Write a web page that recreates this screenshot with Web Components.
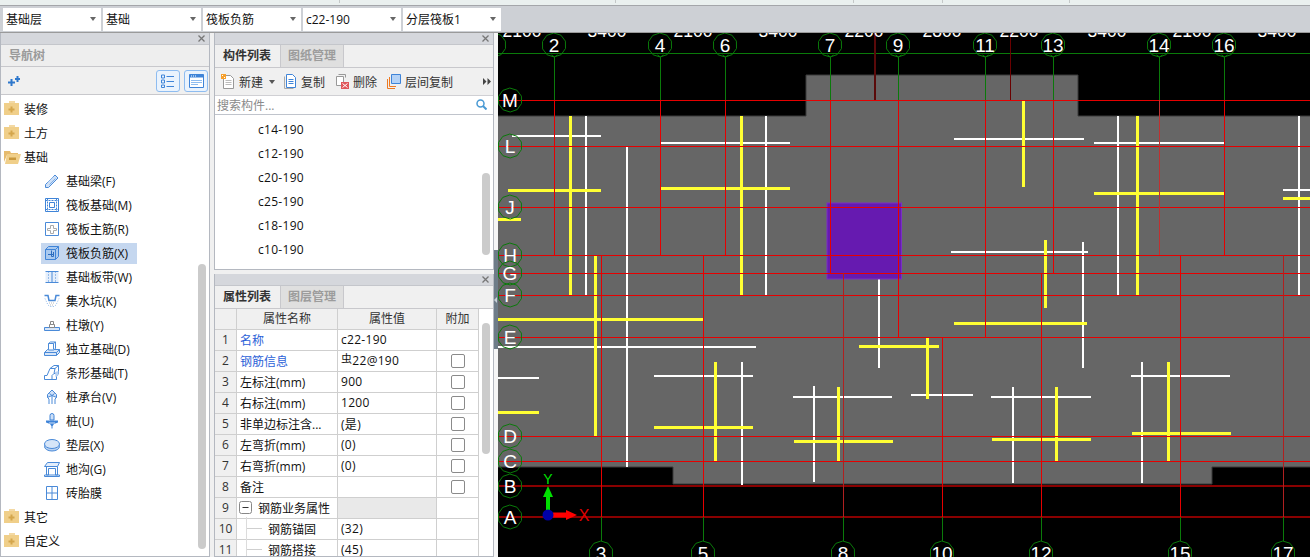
<!doctype html>
<html lang="zh-CN">
<head>
<meta charset="UTF-8" />
<title>筏板负筋</title>
<style>
  html, body { margin: 0; height: 557px; overflow: hidden; background: #f0f0f0; }
  body { font: 12px "Open Sans", "Noto Sans CJK SC", sans-serif; color: #111; }
  #app { display: flex; flex-direction: column; height: 557px; }
  #main { display: flex; flex: 1; min-height: 0; }
  #mid { display: flex; flex-direction: column; gap: 4px; width: 280px; margin-left: 4px; }
</style>
</head>
<body>
<div id="app">
  <top-bar>
    <combo-box style="width:98px">基础层</combo-box>
    <combo-box style="width:98px">基础</combo-box>
    <combo-box style="width:98px">筏板负筋</combo-box>
    <combo-box style="width:98px">c22-190</combo-box>
    <combo-box style="width:98px">分层筏板1</combo-box>
  </top-bar>
  <div id="main">
    <dock-panel style="width:210px">
      <nav-tree>
        <tree-item icon="closed" top>装修</tree-item>
        <tree-item icon="closed" top>土方</tree-item>
        <tree-item icon="open" top>基础</tree-item>
        <tree-item icon="beam">基础梁(F)</tree-item>
        <tree-item icon="raft">筏板基础(M)</tree-item>
        <tree-item icon="main">筏板主筋(R)</tree-item>
        <tree-item icon="neg" selected>筏板负筋(X)</tree-item>
        <tree-item icon="band">基础板带(W)</tree-item>
        <tree-item icon="pit">集水坑(K)</tree-item>
        <tree-item icon="pier">柱墩(Y)</tree-item>
        <tree-item icon="iso">独立基础(D)</tree-item>
        <tree-item icon="strip">条形基础(T)</tree-item>
        <tree-item icon="cap">桩承台(V)</tree-item>
        <tree-item icon="pile">桩(U)</tree-item>
        <tree-item icon="pad">垫层(X)</tree-item>
        <tree-item icon="trench">地沟(G)</tree-item>
        <tree-item icon="brick">砖胎膜</tree-item>
        <tree-item icon="closed" top>其它</tree-item>
        <tree-item icon="closed" top>自定义</tree-item>
      </nav-tree>
    </dock-panel>
    <div id="mid">
      <dock-panel style="height:237px">
        <tab-strip active="构件列表" other="图纸管理"></tab-strip>
        <comp-list>
          <span>c14-190</span><span>c12-190</span><span>c20-190</span>
          <span>c25-190</span><span>c18-190</span><span>c10-190</span>
        </comp-list>
      </dock-panel>
      <dock-panel style="flex:1;min-height:0">
        <tab-strip active="属性列表" other="图层管理"></tab-strip>
        <prop-table>
          <prop-row n="1" value="c22-190" blue nocheck>名称</prop-row>
          <prop-row n="2" value="22@190" blue rebar>钢筋信息</prop-row>
          <prop-row n="3" value="900">左标注(mm)</prop-row>
          <prop-row n="4" value="1200">右标注(mm)</prop-row>
          <prop-row n="5" value="(是)">非单边标注含...</prop-row>
          <prop-row n="6" value="(0)">左弯折(mm)</prop-row>
          <prop-row n="7" value="(0)">右弯折(mm)</prop-row>
          <prop-row n="8" value="">备注</prop-row>
          <prop-row n="9" value="" group nocheck>钢筋业务属性</prop-row>
          <prop-row n="10" value="(32)" child nocheck>钢筋锚固</prop-row>
          <prop-row n="11" value="(45)" child nocheck>钢筋搭接</prop-row>
        </prop-table>
      </dock-panel>
    </div>
    <side-sash></side-sash>
    <cad-canvas></cad-canvas>
  </div>
</div>

<script>
const ICONS = {
  closed: '<path d="M5 0h6v2H5z" fill="#f3d9a4"/><path d="M0 2h15v12H0z" fill="#f0cf8a"/><path d="M6.500 5.500h2v2h2v2h-2v2h-2v-2h-2v-2h2z" fill="#d4a64c"/>',
  open: '<path d="M0 2h6l1 2h7v2H3L0 13z" fill="#e6bb6e"/><path d="M3 5h14l-3 10H1z" fill="#f0cf8a"/><path d="M5 8.500h7v2.500H5z" fill="#c9983c"/>',
  beam: '<path d="M1.500 11.500 11 2l3 3-9.500 9.500h-3z" fill="#cfe0f6" stroke="#4a8ad8"/><path d="M3.500 9.500l6-6M5.500 11.500l6-6" stroke="#7fb0ea"/>',
  raft: '<path d="M1.500 1.500h13v13h-13zM5.500 5.500h5v5h-5z" fill="none" stroke="#3f84d8"/><path d="M1.500 3.500h13M1.500 12.500h13M3.500 1.500v13M12.500 1.500v13" stroke="#3f84d8" stroke-dasharray="2 1"/>',
  main: '<path d="M1.500 1.500h13v13h-13z" fill="#fff" stroke="#4a8ad8"/><path d="M3.500 7.500h3v-3h3v3h3v2h-3v3h-3v-3h-3z" fill="none" stroke="#aaa"/>',
  neg: '<path d="M4.500 1.500h10v10l-3 3h-10v-10z" fill="#a9c9ef" stroke="#3f84d8"/><path d="M1.500 4.500h10v10M11.500 4.500l3-3" fill="none" stroke="#3f84d8"/><path d="M7.500 5.500v6M4 9.500h6M9.500 7v4.500h-2" fill="none" stroke="#2a6cc0"/>',
  band: '<path d="M1.500 2.500h13v11h-13z" fill="#e4eefb"/><path d="M1.500 2.500h13M1.500 13.500h13M8 2.500v11" stroke="#4a8ad8"/><path d="M4.500 2.500v11M11.500 2.500v11" stroke="#4a8ad8" stroke-dasharray="1 2"/>',
  pit: '<path d="M.5 2.500h3.500l1 5h6l1-5h3.500" fill="none" stroke="#4a8ad8" stroke-width="1.500"/><path d="M1 5.500l3 6.500 2 1.500h4l2-1.500 3-6.500" fill="none" stroke="#8fb8ea" stroke-dasharray="1 1.500"/><path d="M5 10h6M6 12h4" stroke="#bbb" stroke-dasharray="1 1"/>',
  pier: '<path d="M.5 10.500h15v3H.5z" fill="#d6e5f8" stroke="#4a8ad8"/><path d="M5.500 7.500h5v3h-5z" fill="#fff" stroke="#888"/><path d="M6.500 4.500h3v3h-3z" fill="#fff" stroke="#888"/>',
  iso: '<path d="M.5 11.500l3-3h12v3l-3 3H.5z" fill="#d6e5f8" stroke="#4a8ad8"/><path d="M.5 11.500h12v3M12.500 11.500l3-3" fill="none" stroke="#4a8ad8"/><path d="M4.500 8.500v-6l2-1.500h5v6.500l-2 1.500h-5zM4.500 2.500h5v6M9.500 2.500l2-1.500" fill="#fff" stroke="#4a8ad8"/>',
  strip: '<path d="M.5 14.500v-4h2.500l3-7 4-3h4.500v8l-2 3v3z" fill="#fff" stroke="#4a8ad8"/><path d="M6 3.500h5l-1 5-2 2v4M11 3.500l3.500-3M10 8.500h5" fill="none" stroke="#4a8ad8"/><path d="M11 7l3.500-1v4l-3 2z" fill="#b9d2f2"/>',
  cap: '<path d="M8 1l4.500 4.500v3L8 6.500l-4.500 2v-3z" fill="#cfe0f6" stroke="#4a8ad8"/><path d="M3.500 8.500l1.500 1.500v5M8 6.500v8.500M12.500 8.500L11 10v5M5.500 4.500l2.500 2 2.500-2" fill="none" stroke="#4a8ad8"/>',
  pile: '<path d="M6 2.500a2 2 0 0 1 4 0v4.500H6z" fill="#cfe0f6" stroke="#3f84d8"/><path d="M2 7.500h12v2l-4 1.500-2 3-2-3-4-1.500z" fill="#3f84d8"/><path d="M5 10h6" stroke="#cfe0f6"/><path d="M8 13.500v2" stroke="#3f84d8"/>',
  pad: '<ellipse cx="8" cy="9.500" rx="7.500" ry="4.500" fill="#b9d2f2" stroke="#4a8ad8"/><ellipse cx="8" cy="7" rx="7.500" ry="4.500" fill="#d6e5f8" stroke="#4a8ad8"/>',
  trench: '<path d="M.5 15.500h15v-1.500H.5zM2.500 5.500h11v8.500h-2V7.500h-7v6.500h-2z" fill="#fff" stroke="#4a8ad8"/><path d="M.5 5.500l3-4h12l-2 4z" fill="#e4eefb" stroke="#4a8ad8"/>',
  brick: '<path d="M2.500 1.500h11v13h-11z" fill="#fff" stroke="#4a8ad8"/><path d="M8 1.500v13M2.500 8h11" stroke="#4a8ad8"/>'
};

// shadow root helper, every element below goes through this
function shadow(el, css, html) {
  el.attachShadow({ mode: 'open' }).innerHTML = `<style>${css}</style>${html}`;
}

class TopBar extends HTMLElement {
  constructor() {
    super();
    const ticks = [339, 615, 853, 942, 1069]
      .map(x => `linear-gradient(#c4c8c8,#c4c8c8) ${x}px 0/1px 3px no-repeat`).join(',');
    shadow(this, `
      :host { display: block; flex: none; height: 33px; }
      .strip { height: 5px; background: ${ticks}, #eaf0ef; border-bottom: 1px solid #a4a6aa; }
      .bar { height: 27px; box-sizing: border-box; background: #cdd0d5; border-bottom: 1px solid #9a9a9a;
             display: flex; gap: 2px; padding: 2px 0 1px 3px; }
    `, `<div class="strip"></div><div class="bar"><slot></slot></div>`);
  }
}

class ComboBox extends HTMLElement {
  constructor() {
    super();
    shadow(this, `
      :host { display: flex; align-items: center; box-sizing: border-box; height: 23px; background: #fff;
              padding: 0 0 1px 3px; font-size: 12px; color: #111; }
      .t { flex: 1; white-space: nowrap; }
      .a { width: 0; height: 0; margin-right: 5px; border: 3px solid transparent; border-top: 4px solid #666; border-bottom: 0; }
    `, `<span class="t"><slot></slot></span><span class="a"></span>`);
  }
}

class DockPanel extends HTMLElement {
  constructor() {
    super();
    shadow(this, `
      :host { display: flex; flex-direction: column; flex: none; box-sizing: border-box; overflow: hidden;
              background: #fff; border: 1px solid #b4b8c0; border-width: 0 1px 1px 1px; }
      .title { flex: none; height: 12px; box-sizing: border-box; background: #d5d7dc; display: flex; justify-content: flex-end;
               align-items: center; padding-right: 4px; border-bottom: 1px solid #c4c6cb; }
      svg { display: block; }
      .body { flex: 1; min-height: 0; display: flex; flex-direction: column; }
    `, `<div class="title"><svg width="7" height="7" viewBox="0 0 7 7"><path d="M.5.5l6 6M6.500.5l-6 6" stroke="#777" stroke-width="1.300"/></svg></div>
        <div class="body"><slot></slot></div>`);
  }
}

class NavTree extends HTMLElement {
  constructor() {
    super();
    shadow(this, `
      :host { display: flex; flex-direction: column; flex: 1; min-height: 0; }
      .head { flex: none; height: 22px; box-sizing: border-box; background: #eeeeee; border-bottom: 1px solid #c8c8cc; padding-left: 8px;
              font-size: 12px; font-weight: 700; color: #9a9a9a; line-height: 21px; }
      .tools { flex: none; height: 28px; box-sizing: border-box; background: #f0f0f0; border-bottom: 1px solid #c8c8cc; display: flex; align-items: center;
               padding: 0 1px 0 7px; gap: 4px; }
      .tools .add { margin-right: auto; }
      .btn { width: 24px; height: 22px; box-sizing: border-box; border: 1px solid #8ebcf0; border-radius: 3px; background: #eaf3fd;
             display: flex; align-items: center; justify-content: center; }
      svg { display: block; }
      .rows { flex: 1; display: flex; min-height: 0; }
      .list { flex: 1; padding-top: 2px; }
      .bar { width: 8px; height: 285px; margin: 169px 3px 0 0; border-radius: 4px; background: #cbcbcb; }
    `, `<div class="head">导航树</div>
      <div class="tools">
        <svg class="add" width="13" height="12" viewBox="0 0 13 12">
          <path d="M0 7.500h7M3.500 4v7M7 4h5M9.500 1v6" stroke="#2f78cc" stroke-width="2"/>
        </svg>
        <div class="btn"><svg width="14" height="14" viewBox="0 0 14 14" fill="none" stroke="#3f84d8">
          <path d="M.5 1h3v3h-3zM.5 6h3v3h-3zM.5 11h3v2.500h-3zM5.500 2.500H13M5.500 7.500H13M5.500 12.500H13"/></svg></div>
        <div class="btn"><svg width="15" height="14" viewBox="0 0 15 14">
          <path d="M.5.5h14v13H.5z" fill="#fff" stroke="#3f84d8"/><path d="M.5.5h14v3H.5z" fill="#3f84d8"/>
          <path d="M2 2h1M4 2h1M6 2h1" stroke="#fff"/><path d="M2 6.500h11M2 8.500h11M2 10.500h7" stroke="#8ebcf0"/></svg></div>
      </div>
      <div class="rows"><div class="list"><slot></slot></div><div class="bar"></div></div>`);
  }
}

class TreeItem extends HTMLElement {
  constructor() {
    super();
    const top = this.hasAttribute('top');
    const selected = this.hasAttribute('selected');
    shadow(this, `
      :host { display: flex; align-items: center; height: 24px; padding-left: ${top ? 0 : 40}px; }
      .in { display: flex; align-items: center; height: 21px; white-space: nowrap; padding: 0 9px 1px 3px; box-sizing: border-box;
            gap: ${top ? 4 : 6}px; background: ${selected ? '#c5d7ef' : 'transparent'}; font-size: 12px; color: #111; }
      svg { display: block; flex: none; overflow: visible; }
    `, `<div class="in"><svg width="16" height="16" viewBox="0 0 16 16">${ICONS[this.getAttribute('icon')]}</svg><span><slot></slot></span></div>`);
  }
}

class TabStrip extends HTMLElement {
  constructor() {
    super();
    shadow(this, `
      :host { display: flex; flex: none; height: 22px; background: #f0f0f0; border-bottom: 1px solid #c8c8cc; box-sizing: content-box; font-size: 12px; }
      .on { width: 64px; padding-right: 1px; text-align: center; line-height: 21px; font-weight: 700; color: #333; }
      .off { width: 64px; text-align: center; line-height: 21px; font-weight: 700; color: #9c9c9c; background: #dfdfdf;
             border: solid #c8c8cc; border-width: 0 1px; box-sizing: border-box; }
    `, `<div class="on">${this.getAttribute('active')}</div><div class="off">${this.getAttribute('other')}</div>`);
  }
}

class CompList extends HTMLElement {
  constructor() {
    super();
    shadow(this, `
      :host { display: flex; flex-direction: column; flex: 1; min-height: 0; font-size: 12px; }
      svg { display: block; flex: none; }
      .tools { flex: none; height: 28px; box-sizing: border-box; background: #f0f0f0; border-bottom: 1px solid #d0d0d4;
               display: flex; align-items: center; padding-left: 6px; color: #333; }
      .tools span { margin-left: 4px; }
      .caret { width: 0; height: 0; margin: 1px 0 0 6px; border: 3px solid transparent; border-top: 4px solid #555; border-bottom: 0; }
      .more { margin-left: auto; margin-right: 2px; }
      .search { flex: none; height: 19px; box-sizing: border-box; border-bottom: 1px solid #c0c4cc; display: flex; align-items: center;
                padding: 0 6px 1px 2px; color: #8a8a8a; }
      .search span { flex: 1; }
      .rows { flex: 1; min-height: 0; display: flex; }
      .list { flex: 1; padding: 3px 0 0 43px; display: flex; flex-direction: column; }
      ::slotted(span) { height: 24px; line-height: 23px; color: #111; letter-spacing: .3px; }
      .bar { width: 8px; height: 82px; margin: 58px 3px 0 0; border-radius: 4px; background: #cbcbcb; }
    `, `<div class="tools">
        <svg width="14" height="15" viewBox="0 0 14 15"><path d="M2.500 1.500h7l3 3v10h-10z" fill="#fff" stroke="#999"/><path d="M4.500 6.500h6M4.500 8.500h6M4.500 10.500h6" stroke="#bbb"/><path d="M0 0h5v5H0z" fill="#f6a02c"/><path d="M1 1h1v1H1zM3 3h1v1H3z" fill="#fff"/></svg>
        <span>新建</span><i class="caret"></i>
        <svg style="margin-left:8px" width="14" height="15" viewBox="0 0 14 15"><path d="M1.500 2.500v12h9" fill="none" stroke="#aaa"/><path d="M3.500.5h6l3 3v10h-9z" fill="#fff" stroke="#3f84d8"/><path d="M5.500 5.500h5M5.500 7.500h5M5.500 9.500h5" stroke="#3f84d8"/></svg>
        <span>复制</span>
        <svg style="margin-left:10px" width="14" height="15" viewBox="0 0 14 15"><path d="M1.500 2.500h7v9h-7z" fill="#fff" stroke="#999"/><path d="M3.500.5h7v3" fill="none" stroke="#999"/><path d="M6 8h8v7H6z" fill="#e0565a"/><path d="M7.500 9.500l5 4M12.500 9.500l-5 4" stroke="#fff"/></svg>
        <span>删除</span>
        <svg style="margin-left:10px" width="14" height="15" viewBox="0 0 14 15"><path d="M.5 5v9.500H8M2.500 3v9.500H9" fill="none" stroke="#ee7a22"/><path d="M4.500.5h9v9h-9z" fill="#b4d2f6" stroke="#3f84d8"/></svg>
        <span>层间复制</span>
        <svg class="more" width="8" height="7" viewBox="0 0 8 7"><path d="M0 0l3.500 3.500L0 7zM4.500 0L8 3.500 4.500 7z" fill="#444"/></svg>
      </div>
      <div class="search"><span>搜索构件...</span>
        <svg width="11" height="11" viewBox="0 0 11 11"><circle cx="4.500" cy="4.500" r="3.500" fill="none" stroke="#4a9ad4" stroke-width="1.500"/><path d="M7 7l3.500 3.500" stroke="#4a9ad4" stroke-width="2"/></svg>
      </div>
      <div class="rows"><div class="list"><slot></slot></div><div class="bar"></div></div>`);
  }
}

class PropTable extends HTMLElement {
  constructor() {
    super();
    shadow(this, `
      :host { display: flex; flex: 1; min-height: 0; font-size: 12px; }
      .tbl { width: 264px; flex: none; }
      .bar { width: 8px; height: 131px; margin: 14px 0 0 3px; border-radius: 4px; background: #cbcbcb; }
      .hd { display: grid; grid-template-columns: 22px 101px 99px 42px; height: 21px; box-sizing: border-box; }
      .hd div { background: #f0f0f0; border: solid #cfcfcf; border-width: 0 1px 1px 0; text-align: center; line-height: 19px; color: #333; }
    `, `<div class="tbl"><div class="hd"><div></div><div>属性名称</div><div>属性值</div><div>附加</div></div><slot></slot></div><div class="bar"></div>`);
  }
}

class PropRow extends HTMLElement {
  constructor() {
    super();
    const a = n => this.hasAttribute(n);
    const group = a('group'), child = a('child');
    const val = a('rebar')
      ? `<span class="bar-sym">虫</span>${this.getAttribute('value')}`
      : this.getAttribute('value');
    const lead = group
      ? `<svg width="13" height="13" viewBox="0 0 13 13"><rect x=".5" y=".5" width="12" height="12" rx="2" fill="#fff" stroke="#888"/><path d="M3.500 6.500h6" stroke="#333"/></svg>`
      : child ? `<i class="tree"></i>` : '';
    shadow(this, `
      :host { display: grid; grid-template-columns: 22px 101px 99px 42px; height: 21px; box-sizing: border-box; font-size: 12px; color: #111; }
      .c { border: solid #cfcfcf; border-width: 0 1px 1px 0; display: flex; align-items: center; white-space: nowrap; box-sizing: border-box; min-width: 0; padding-bottom: 1px; }
      .n { background: #f0f0f0; justify-content: center; color: #333; }
      .name { padding-left: ${group ? 2 : child ? 9 : 3}px; gap: ${group ? 6 : 0}px; color: ${a('blue') ? '#2c62d8' : '#111'}; }
      .val { padding-left: 3px; background: ${group ? '#e9e9e9' : '#fff'}; letter-spacing: .3px; }
      .chk { justify-content: center; }
      .box { width: 12px; height: 12px; border: 1px solid #8a8a8a; border-radius: 2px; background: #fff; }
      .tree { position: relative; width: 16px; height: 1px; background: #cfcfcf; margin-right: 6px; flex: none; }
      .tree::before { content: ""; position: absolute; left: 0; top: -11px; width: 1px; height: 22px; background: #dcdcdc; }
      .bar-sym { font-size: 11px; position: relative; top: -2px; }
      svg { display: block; flex: none; }
    `, `<div class="c n">${this.getAttribute('n')}</div>
        <div class="c name">${lead}<span><slot></slot></span></div>
        <div class="c val"><span>${val}</span></div>
        <div class="c chk">${a('nocheck') ? '' : '<i class="box"></i>'}</div>`);
  }
}

class SideSash extends HTMLElement {
  constructor() {
    super();
    shadow(this, `
      :host { display: flex; flex-direction: column; flex: none; width: 4px; background: #f6f6f6; }
      .top { height: 217px; }
      .mid { height: 99px; background: #6e7c88; display: flex; align-items: center; }
      .mid i { width: 0; height: 0; border: 3px solid transparent; border-right: 3px solid #c8d0d8; border-left: 0; }
    `, `<div class="top"></div><div class="mid"><i></i></div>`);
  }
}

// the drawing itself, free canvas so coordinates are page pixels
class CadCanvas extends HTMLElement {
  constructor() {
    super();
    const RED = '#e60000', DARK = '#8a0000', GREEN = '#0a7a0a';
    const W = '#ffffff', Y = '#ffff33';
    let s = '';
    const line = (x1, y1, x2, y2, c, w = 1) => {
      s += `<line x1="${x1}" y1="${y1}" x2="${x2}" y2="${y2}" stroke="${c}" stroke-width="${w}"/>`;
    };
    const h = (x1, x2, y, c, w) => line(x1, y, x2, y, c, w);
    const v = (x, y1, y2, c, w) => line(x, y1, x, y2, c, w);

    s += `<path d="M497 116H806V75H1078V116H1311V467H1212V484H673V467H497Z" fill="#666666" stroke="#3a3a3a"/>`;

    // slab rebars, white [x1,x2,y] / [x,y1,y2]
    [[512,601,136],[661,790,143],[954,1084,139],[1094,1224,143],[1283,1310,190],[951,1088,252],[498,756,347],[498,539,378],
     [654,753,376],[793,892,397],[911,973,395],[991,1091,397],[1131,1230,376]].forEach(a => h(a[0], a[1], a[2], W, 2));
    [[586,116,295],[627,146,467],[766,116,295],[1118,116,295],[1299,116,295],[879,274,368],[1083,242,368],[742,362,485],
     [814,386,482],[1013,387,483],[1142,362,483]].forEach(a => v(a[0], a[1], a[2], W, 2));
    [[508,601,190.5],[498,521,219],[661,790,188.5],[1094,1224,193.5],[1283,1310,198.5],[954,1087,323.5],[498,703,319.5],
     [859,939,346.5],[498,539,412.5],[654,753,427.5],[794,893,441.5],[992,1091,439.5],[1132,1231,433]].forEach(a => h(a[0], a[1], a[2], Y, 3));
    [[570.5,116,295],[741.5,116,295],[1137.5,116,295],[1023.5,101,187],[595.5,256,436],[1045.5,240,308],[927.5,338,399],[715.5,362,461],
     [838.5,387,461],[1056.5,387,461],[1168.5,362,461]].forEach(a => v(a[0], a[1], a[2], Y, 3));

    s += `<rect x="827" y="203" width="74.5" height="76" fill="#661ab0" stroke="#7a2fc4"/>`;

    // axes
    h(498, 1310, 53.5, GREEN);
    [[100.5,RED,1],[146.5,RED,1.5],[207.5,RED,1],[255.5,RED,1],[273.5,RED,1],[295.5,RED,1],
     [337.5,RED,1],[436.5,RED,1],[461.5,RED,1],[486,DARK,2],[517,DARK,2]]
      .forEach(a => h(498, 1310, a[0], a[1], a[2]));
    v(874.5, 33, 100, '#5a0a0a', 2);
    v(1010.5, 33, 100, '#6a0000');
    const top = [['2',554.5,255],['4',660.5,255],['6',725.5,255],['7',830.5,273],['9',898.5,337],
                 ['11',985.5,337],['13',1053.5,273],['14',1159.5,255],['16',1224.5,255]];
    const bot = [['3',601.5,255],['5',703.5,255],['8',843.5,273],['10',942.5,337],['12',1041.5,273],['15',1180.5,255],['17',1283.5,255]];
    top.forEach(a => { v(a[1], 57, 100, GREEN); v(a[1], 100, a[2], a[0] === '14' ? '#c03030' : RED); });
    bot.forEach(a => { v(a[1], a[2], 517, a[0] === '8' || a[0] === '17' ? '#b02020' : RED); v(a[1], 517, 541, GREEN); });

    // bubbles
    const bubble = (cx, cy, t) => {
      const pts = [];
      for (let i = 0; i < 10; i++) {
        const r = i * Math.PI / 5 + 0.3;
        pts.push((cx + 12 * Math.cos(r)).toFixed(1) + ',' + (cy + 12 * Math.sin(r)).toFixed(1));
      }
      s += `<polygon points="${pts.join(' ')}" fill="none" stroke="${GREEN}"/>`;
      s += `<text x="${cx}" y="${cy + 7}" text-anchor="middle" font-size="19" fill="#fff">${t}</text>`;
    };
    top.forEach(a => {
      bubble(Math.floor(a[1]), 45, a[0]);
      s += `<path d="M${a[1] - 3} 55l3 2 3-2" fill="none" stroke="${GREEN}"/>`;
    });
    bot.forEach(a => bubble(Math.floor(a[1]), 553, a[0]));
    [['M',100],['L',146],['J',207],['H',255],['G',273],['F',295],['E',337],['D',436],['C',461],['B',486],['A',517]]
      .forEach(a => bubble(510, a[1], a[0]));
    bubble(494, 45, '');

    [['2100',522],['3400',607],['2100',693],['3400',778],['2200',864],['2800',942],['2200',1019],['3400',1107],['2100',1192],['3400',1277]]
      .forEach(a => { s += `<text x="${a[1]}" y="37" text-anchor="middle" font-size="17.5" fill="#fff">${a[0]}</text>`; });

    // ucs marker
    s += `<path d="M548 510V495" stroke="#00e000" stroke-width="4"/><path d="M543 497l5-11 5 11z" fill="#00e000"/>`;
    s += `<path d="M553 515H568" stroke="#ff0000" stroke-width="5"/><path d="M566 510l11 5-11 5z" fill="#ff0000"/>`;
    s += `<circle cx="548" cy="515" r="5.5" fill="#0000a8"/>`;
    s += `<text x="548" y="484" text-anchor="middle" font-size="14" fill="#00e000">Y</text>`;
    s += `<text x="584" y="521" text-anchor="middle" font-size="16" fill="#e00000">X</text>`;

    shadow(this, `
      :host { display: block; flex: 1; min-width: 0; background: #000; overflow: hidden; }
      svg { display: block; font-family: "Liberation Sans", Arial, sans-serif; }
      line { shape-rendering: crispEdges; }
    `, `<svg width="812" height="524" viewBox="498 33 812 524">${s}</svg>`);
  }
}

customElements.define('top-bar', TopBar);
customElements.define('combo-box', ComboBox);
customElements.define('dock-panel', DockPanel);
customElements.define('nav-tree', NavTree);
customElements.define('tree-item', TreeItem);
customElements.define('tab-strip', TabStrip);
customElements.define('comp-list', CompList);
customElements.define('prop-table', PropTable);
customElements.define('prop-row', PropRow);
customElements.define('side-sash', SideSash);
customElements.define('cad-canvas', CadCanvas);
</script>
</body>
</html>
